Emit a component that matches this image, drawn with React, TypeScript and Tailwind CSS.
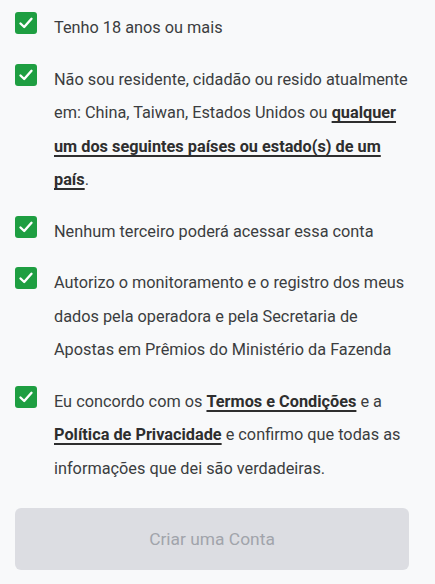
import React from "react";

function Check() {
  return (
    <span className="mt-[1px] flex h-[22px] w-[22px] shrink-0 items-center justify-center rounded-[3px] bg-[#1e9e41]">
      <svg width="16" height="16" viewBox="0 0 16 16" fill="none">
        <path d="M2.5 8.5 L6.2 12 L13.5 3.8" stroke="white" strokeWidth="2.4" strokeLinecap="round" strokeLinejoin="round" />
      </svg>
    </span>
  );
}

function L({ children }: { children: React.ReactNode }) {
  return (
    <a className="font-bold text-[#2e2e2e] underline decoration-[1.5px] underline-offset-[3px] [text-decoration-skip-ink:none]">
      {children}
    </a>
  );
}

const items: React.ReactNode[] = [
  <>Tenho 18 anos ou mais</>,
  <>
    Não sou residente, cidadão ou resido atualmente em: China, Taiwan, Estados Unidos ou{" "}
    <L>qualquer um dos seguintes países ou estado(s) de um país</L>.
  </>,
  <>Nenhum terceiro poderá acessar essa conta</>,
  <>Autorizo o monitoramento e o registro dos meus dados pela operadora e pela Secretaria de Apostas em Prêmios do Ministério da Fazenda</>,
  <>
    Eu concordo com os <L>Termos e Condições</L> e a <L>Política de Privacidade</L> e confirmo que todas as informações que dei são verdadeiras.
  </>,
];

export default function App() {
  return (
    <div className="min-h-[584px] bg-[#f8f9fa] pl-[15px] pr-[24px] pt-[11px] font-['Roboto',sans-serif] text-[16.3px] text-[#3b3d40]">
      <div className="flex flex-col gap-[18px]">
        {items.map((it, i) => (
          <label key={i} className="flex items-start gap-[17px]">
            <Check />
            <span className="leading-[33.5px]">{it}</span>
          </label>
        ))}
      </div>
      <button className="mt-[23px] h-[62px] w-[394px] rounded-[6px] bg-[#dcdde2] text-[17.4px] text-[#a1a4ab]">
        Criar uma Conta
      </button>
    </div>
  );
}
